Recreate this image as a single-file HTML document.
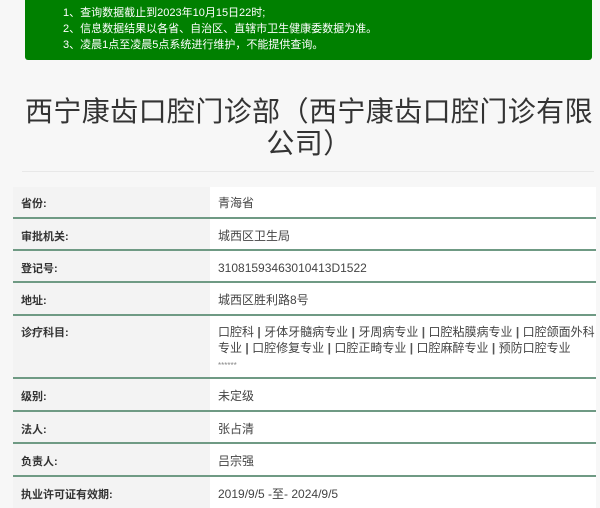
<!DOCTYPE html>
<html><head><meta charset="utf-8"><style>
body{margin:0;background:#f7f7f7;font-family:"Liberation Sans","Noto Sans CJK SC",sans-serif;width:600px;height:504px;overflow:hidden;position:relative;color:#333}
.g{position:absolute;left:25px;top:-4px;width:567px;height:64px;background:#008000;border-radius:3px;color:#fff;font-size:11px}
.g div{position:absolute;left:38px}
h1{position:absolute;left:0;width:618px;top:96px;margin:0;font-weight:normal;font-size:28px;letter-spacing:0.4px;line-height:32px;text-align:center;color:#333;white-space:nowrap}
.hr{position:absolute;left:22px;width:572px;top:171px;border-top:1px solid #e8e8e8}
.r{position:absolute;left:13px;width:583px;border-bottom:2px solid #6f9a84}
.l{position:absolute;left:0;top:0;bottom:0;width:197px;background:#f3f3f3}
.l span{position:absolute;left:8px;font-size:11px;font-weight:bold;color:#333}
.v{position:absolute;left:197px;right:0;top:0;bottom:0;background:#fff}
.v span{position:absolute;left:8px;font-size:12px;color:#444;line-height:16px;white-space:nowrap}
b{font-weight:bold;color:#555;margin:0 3.4px}
</style></head><body>
<div class="g"><div style="top:8px">1、查询数据截止到2023年10月15日22时;</div><div style="top:24px">2、信息数据结果以各省、自治区、直辖市卫生健康委数据为准。</div><div style="top:40px">3、凌晨1点至凌晨5点系统进行维护，不能提供查询。</div></div>
<h1>西宁康齿口腔门诊部（西宁康齿口腔门诊有限<br>公司）</h1>
<div class="hr"></div>
<div class="r" style="top:187px;height:30px"><div class="l"><span style="top:8px">省份:</span></div><div class="v"><span style="top:8px">青海省</span></div></div>
<div class="r" style="top:219px;height:30px"><div class="l"><span style="top:9px">审批机关:</span></div><div class="v"><span style="top:9px">城西区卫生局</span></div></div>
<div class="r" style="top:251px;height:30px"><div class="l"><span style="top:9px">登记号:</span></div><div class="v"><span style="top:9px">31081593463010413D1522</span></div></div>
<div class="r" style="top:283px;height:31px"><div class="l"><span style="top:9px">地址:</span></div><div class="v"><span style="top:9px">城西区胜利路8号</span></div></div>
<div class="r" style="top:316px;height:61px"><div class="l"><span style="top:8px">诊疗科目:</span></div><div class="v"><span style="top:8px">口腔科<b>|</b>牙体牙髓病专业<b>|</b>牙周病专业<b>|</b>口腔粘膜病专业<b>|</b>口腔颌面外科<br>专业<b>|</b>口腔修复专业<b>|</b>口腔正畸专业<b>|</b>口腔麻醉专业<b>|</b>预防口腔专业<br><span style="position:static;font-size:8px;color:#888">******</span></span></div></div>
<div class="r" style="top:379px;height:31px"><div class="l"><span style="top:9px">级别:</span></div><div class="v"><span style="top:9px">未定级</span></div></div>
<div class="r" style="top:412px;height:30px"><div class="l"><span style="top:9px">法人:</span></div><div class="v"><span style="top:9px">张占清</span></div></div>
<div class="r" style="top:444px;height:31px"><div class="l"><span style="top:9px">负责人:</span></div><div class="v"><span style="top:9px">吕宗强</span></div></div>
<div class="r" style="top:477px;height:31px;border:0"><div class="l"><span style="top:9px">执业许可证有效期:</span></div><div class="v"><span style="top:9px">2019/9/5 -至- 2024/9/5</span></div></div>
</body></html>
